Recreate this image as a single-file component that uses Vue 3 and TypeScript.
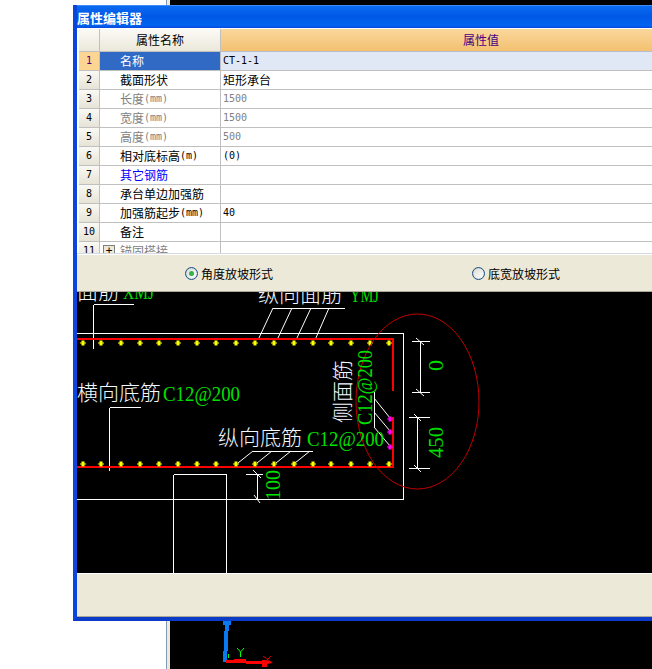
<template>
  <div class="desktop">
    <div class="side-white"></div>
    <div class="side-strip"></div>
    <div class="workspace">
      <svg class="axes" width="482" height="48" viewBox="170 621 482 48">
        <path class="axis-blue" d="M223 621h8v4h-2v6h-1v20h-1v11h-4v-11h1v-20h1v-6h-2z" />
        <path class="axis-red" d="M226 660h8v-1h12v2h16v-1h5l6 3-6 1v3h-5v-3h-16v-1h-20z" />
        <path class="axis-y" d="M237 648l3.500 4 3.500-4M240.500 652v5M228.500 654v4" />
        <path class="axis-x" d="M263 656l8 6M271 656l-6 6" />
      </svg>
    </div>

    <section class="dialog">
      <header class="title">属性编辑器</header>

      <div class="grid-wrap">
        <div class="grid">
          <div class="cell index head"></div>
          <div class="cell name head centered">属性名称</div>
          <div class="cell value head-value centered">属性值</div>

          <template v-for="(row, i) in rows" :key="i">
            <div class="cell index" :class="{ 'index-on': i === 0 }">{{ i + 1 }}</div>
            <div class="cell name" :class="[row.tone, { 'name-on': i === 0 }]">
              <span v-if="row.expand" class="plus">+</span>
              <span>{{ row.name }}</span><span v-if="row.unit" class="latin">{{ row.unit }}</span>
            </div>
            <div class="cell value" :class="[row.tone, { 'value-on': i === 0, cjk: row.cjk }]">{{ row.value }}</div>
          </template>
        </div>
      </div>

      <div class="options">
        <label class="option">
          <span class="radio"><span class="radio-dot"></span></span>
          角度放坡形式
        </label>
        <label class="option">
          <span class="radio"></span>
          底宽放坡形式
        </label>
      </div>

      <svg class="canvas" width="575" height="281" viewBox="77 292 575 281">
        <g class="wires">
          <line v-for="(l, i) in whiteLines" :key="i" :x1="l[0]" :y1="l[1]" :x2="l[2]" :y2="l[3]" />
        </g>
        <g class="slants">
          <line v-for="(l, i) in slantLines" :key="i" :x1="l[0]" :y1="l[1]" :x2="l[2]" :y2="l[3]" />
        </g>
        <path class="rebar" d="M77 339H393V391M393 417V467H77" />
        <path class="dot-yellow" :d="diamonds(yellowDots)" />
        <path class="dot-pink" :d="diamonds(pinkDots)" />
        <ellipse class="ring" cx="417.5" cy="401.5" rx="61.5" ry="87.5" />

        <text class="cad-white" x="77" y="299">面筋</text>
        <text class="cad-green" x="123" y="299" textLength="31" lengthAdjust="spacingAndGlyphs">XMJ</text>
        <text class="cad-white" x="258" y="302">纵向面筋</text>
        <text class="cad-green" x="350" y="302" textLength="29" lengthAdjust="spacingAndGlyphs">YMJ</text>
        <text class="cad-white" x="77" y="400">横向底筋</text>
        <text class="cad-green" x="163" y="401" textLength="77" lengthAdjust="spacingAndGlyphs">C12@200</text>
        <text class="cad-white" x="218" y="445">纵向底筋</text>
        <text class="cad-green" x="307" y="446" textLength="77" lengthAdjust="spacingAndGlyphs">C12@200</text>
        <text class="cad-white" transform="translate(350 423) rotate(-90)">侧面筋</text>
        <text class="cad-green" transform="translate(372 425) rotate(-90)" textLength="75" lengthAdjust="spacingAndGlyphs">C12@200</text>
        <text class="cad-green" transform="translate(443 371) rotate(-90)" textLength="11" lengthAdjust="spacingAndGlyphs">0</text>
        <text class="cad-green" transform="translate(443 458) rotate(-90)" textLength="31" lengthAdjust="spacingAndGlyphs">450</text>
        <text class="cad-green" transform="translate(280 500) rotate(-90)" textLength="30" lengthAdjust="spacingAndGlyphs">100</text>
      </svg>

      <div class="footer"></div>
    </section>
  </div>
</template>

<script setup lang="ts">
interface Row {
  name: string;
  unit?: string;
  value?: string;
  tone?: 'muted' | 'link';
  cjk?: boolean;
  expand?: boolean;
}

type Seg = [number, number, number, number];
type Pt = [number, number];

const rows: Row[] = [
  { name: '名称', value: 'CT-1-1' },
  { name: '截面形状', value: '矩形承台', cjk: true },
  { name: '长度', unit: '(mm)', value: '1500', tone: 'muted' },
  { name: '宽度', unit: '(mm)', value: '1500', tone: 'muted' },
  { name: '高度', unit: '(mm)', value: '500', tone: 'muted' },
  { name: '相对底标高', unit: '(m)', value: '(0)' },
  { name: '其它钢筋', tone: 'link' },
  { name: '承台单边加强筋' },
  { name: '加强筋起步', unit: '(mm)', value: '40' },
  { name: '备注' },
  { name: '锚固搭接', tone: 'muted', expand: true },
];

const whiteLines: Seg[] = [
  [77, 333.5, 403.5, 333.5], [403.5, 333.5, 403.5, 499.5], [77, 499.5, 403.5, 499.5],
  [93.5, 304.5, 134, 304.5], [93.5, 304.5, 93.5, 349],
  [273, 308.5, 345, 308.5],
  [109.5, 407.5, 141, 407.5], [109.5, 407.5, 109.5, 471],
  [253, 451.5, 313, 451.5],
  [173.5, 474.5, 226.5, 474.5], [173.5, 474.5, 173.5, 573], [226.5, 474.5, 226.5, 573],
  [246, 474.5, 263, 474.5], [257.5, 474.5, 257.5, 499],
  [412, 341.5, 430, 341.5], [412, 392.5, 430, 392.5], [420.5, 341.5, 420.5, 392.5],
  [409, 417.5, 430, 417.5], [409, 468.5, 430, 468.5], [417.5, 417.5, 417.5, 468.5],
  [374.5, 392, 374.5, 427],
];

const slantLines: Seg[] = [
  [273, 308, 258, 340], [292, 308, 277, 340], [311, 308, 296, 340], [329, 308, 315, 340],
  [253, 451, 238, 463], [272, 451, 257, 463], [291, 451, 276, 463], [310, 451, 295, 463],
  [374, 398, 390, 418], [374, 412, 390, 431], [374, 427, 390, 446],
  [253, 470, 261, 478], [254, 495, 260, 503],
  [416, 338, 424, 345], [416, 389, 424, 396], [414, 414, 421, 421], [414, 465, 421, 472],
];

const dotColumns = [83, 101, 121, 140, 159, 178, 197, 216, 236, 255, 274, 294, 313, 331, 351, 370, 389];
const yellowDots: Pt[] = [342, 463].flatMap(y => dotColumns.map((x): Pt => [x, y]));
const pinkDots: Pt[] = [[390, 418], [390, 431], [390, 446]];

const diamonds = (pts: Pt[]) =>
  pts.map(([x, y]) => `M${x - 3} ${y + 0.5}h1.5v-2h3v2h1.5v1h-1.5v2h-3v-2h-1.5z`).join('');
</script>

<style scoped>
.desktop {
  position: relative;
  display: flex;
  width: 652px;
  height: 669px;
  overflow: hidden;
  background: #fff;
}

.side-white {
  width: 166px;
  border-right: 1px solid #7f9db9;
}

.side-strip {
  width: 3px;
  background: #ece9d8;
}

.workspace {
  flex: 1;
  display: flex;
  flex-direction: column;
  justify-content: flex-end;
  background: #000;
}

.axes {
  display: block;
}

.axis-blue { fill: #0a78f0; }
.axis-red { fill: #ff0000; }
.axis-y { fill: none; stroke: #00ff00; }
.axis-x { fill: none; stroke: #d00000; }

.dialog {
  position: absolute;
  left: 73px;
  top: 5px;
  width: 579px;
  height: 616px;
  box-sizing: border-box;
  display: flex;
  flex-direction: column;
  overflow: hidden;
  border-left: 4px solid #0a46dc;
  border-bottom: 4px solid #0a3cc8;
  background: #ece9d8;
  font-family: "Noto Sans CJK SC", "Liberation Sans", sans-serif;
  font-size: 12px;
  color: #000;
}

.title {
  height: 23px;
  line-height: 24px;
  flex: none;
  margin-left: -4px;
  padding-left: 4px;
  border-top: 1px solid #3d8df5;
  box-sizing: border-box;
  background: linear-gradient(#0a6af0 0%, #0058e6 50%, #0064f0 88%, #0a46dc 100%);
  color: #fff;
  font-size: 13px;
  font-weight: 700;
}

.grid-wrap {
  height: 226px;
  flex: none;
  overflow: hidden;
  box-sizing: border-box;
  padding: 1px 0 0 2px;
  background: #fff;
  border-bottom: 1px solid #d5d9e4;
}

.grid {
  display: grid;
  grid-template-columns: 21px 121px 520px;
  grid-template-rows: 23px;
  grid-auto-rows: 19px;
  width: 662px;
}

.cell {
  box-sizing: border-box;
  display: flex;
  align-items: center;
  white-space: pre;
  border-right: 1px solid #c0c0c0;
  border-bottom: 1px solid #c0c0c0;
  line-height: 16px;
}

.index {
  justify-content: center;
  background: linear-gradient(#faf9f4, #e6e3d6);
  font-family: "DejaVu Sans Mono", monospace;
  font-size: 10px;
}

.index-on {
  background: #fdd592;
  color: #4b0082;
}

.name {
  padding-left: 20px;
}

.value {
  padding-left: 2px;
  font-family: "DejaVu Sans Mono", monospace;
  font-size: 10px;
}

.value.cjk {
  font-family: "Noto Sans CJK SC", sans-serif;
  font-size: 12px;
}

.head {
  background: linear-gradient(#fbfaf5, #ebe8da);
}

.head-value {
  background: linear-gradient(#fad79c, #f3c170);
  border-bottom-color: #b8bdd0;
  border-right: 0;
  color: #4b0082;
  font-family: "Noto Sans CJK SC", sans-serif;
  font-size: 12px;
}

.centered {
  justify-content: center;
  padding-left: 0;
}

.name-on {
  background: #316ac5;
  color: #fff;
}

.value-on {
  background: #e0e8f5;
}

.muted { color: #808080; }
.link { color: #0000ff; }

.latin {
  font-family: "DejaVu Sans Mono", monospace;
  font-size: 10px;
}

.plus {
  box-sizing: border-box;
  width: 12px;
  height: 12px;
  margin: 0 5px 0 -17px;
  border: 1px solid #808080;
  background: #ece9d8;
  color: #000;
  font-family: "DejaVu Sans Mono", monospace;
  font-size: 11px;
  line-height: 10px;
  text-align: center;
}

.options {
  height: 38px;
  flex: none;
  box-sizing: border-box;
  display: grid;
  grid-template-columns: 287px 287px;
  align-items: center;
  padding-left: 108px;
  border-top: 1px solid #fff;
  border-bottom: 1px solid #aca899;
}

.option {
  display: flex;
  align-items: center;
  gap: 3px;
}

.radio {
  box-sizing: border-box;
  width: 13px;
  height: 13px;
  display: flex;
  align-items: center;
  justify-content: center;
  border: 1px solid #1c5180;
  border-radius: 50%;
  background: linear-gradient(135deg, #dcdcd4, #fff);
  box-shadow: inset 0 0 1px #7f9db9;
}

.radio-dot {
  width: 5px;
  height: 5px;
  border-radius: 50%;
  background: #31b44a;
}

.canvas {
  display: block;
  flex: none;
  background: #000;
}

.wires line {
  stroke: #fff;
  stroke-width: 1;
  shape-rendering: crispEdges;
}

.slants line {
  stroke: #fff;
  stroke-width: 1;
}

.rebar {
  fill: none;
  stroke: #ff0000;
  stroke-width: 2.4;
  shape-rendering: crispEdges;
}

.dot-yellow { fill: #ffff00; }
.dot-pink { fill: #ff00ff; }

.ring {
  fill: none;
  stroke: #c00000;
  stroke-width: 1;
}

.cad-white {
  fill: #f2f8ff;
  font-family: "Noto Sans CJK SC", sans-serif;
  font-size: 21px;
  font-weight: 300;
}

.cad-green {
  fill: #00e000;
  font-family: "Liberation Serif", serif;
  font-size: 22px;
}

.footer {
  flex: 1;
  border-top: 1px solid #fff;
  border-bottom: 1px solid #aca899;
  background: #ece9d8;
}
</style>
